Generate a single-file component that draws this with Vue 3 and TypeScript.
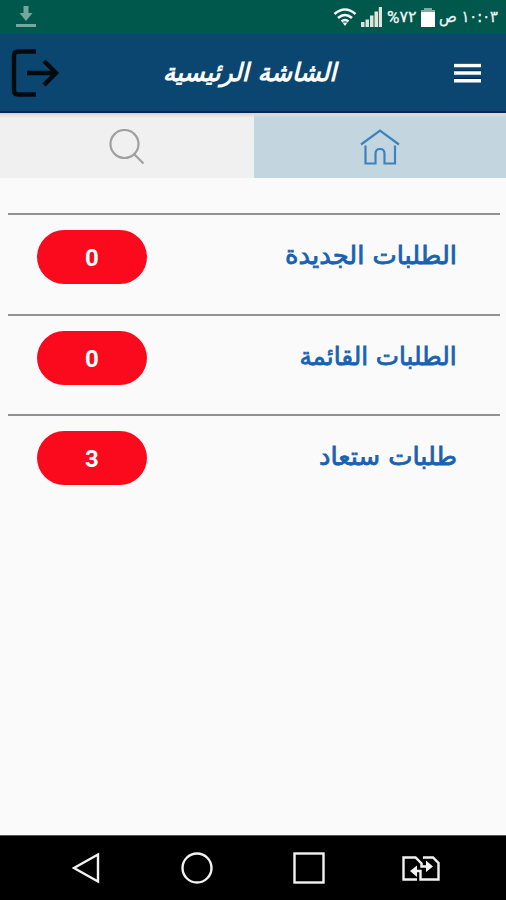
<script setup lang="ts">
interface RequestRow {
  label: string
  count: number
  size: string
}

const rows: RequestRow[] = [
  { label: 'الطلبات الجديدة', count: 0, size: 'new' },
  { label: 'الطلبات القائمة', count: 0, size: 'open' },
  { label: 'طلبات ستعاد', count: 3, size: 'back' },
]
</script>

<template>
  <div class="screen">
    <div class="status">
      <svg class="download" width="20" height="22" viewBox="0 0 20 22">
        <path d="M7.500 0h5v7h4L10 15 3.500 7h4z" />
        <path d="M0 18h20v3H0z" />
      </svg>
      <div class="indicators">
        <svg width="24" height="18" viewBox="0 0 24 18" class="wifi">
          <path d="M1.500 6Q12-3 22.500 6M5 10Q12 4 19 10M8.500 13.500Q12 10.500 15.500 13.500" />
          <path class="dot" d="M9.500 14.500h5L12 18z" />
        </svg>
        <svg width="21" height="20" viewBox="0 0 21 20" class="signal">
          <path d="M0 15h3.500v5H0zM4.500 12.500h3.500V20h-3.500zM9 8.500h3.500V20H9zM13.500 4.500h3.500V20h-3.500zM17.800 0h3.200v20h-3.200z" />
        </svg>
        <span class="percent" dir="ltr"><span class="sign">%</span><span>٧٢</span></span>
        <svg width="14" height="20" viewBox="0 0 14 20" class="battery">
          <path class="cap" d="M3 0h8v2h3v4H0V2h3z" />
          <path d="M0 4h14v15H0z" />
        </svg>
        <span class="clock" dir="rtl">١٠:٠٣ ص</span>
      </div>
    </div>

    <header class="bar">
      <svg class="logout" width="50" height="48" viewBox="0 0 50 48">
        <path d="M25 2.500H7Q3 2.500 3 6.500V41.500Q3 45.500 7 45.500H25M16 24H45M33 12L45 24 33 36" />
      </svg>
      <h1 class="title" dir="rtl"><span>الشاشة الرئيسية</span></h1>
      <svg class="menu" width="27" height="20" viewBox="0 0 27 20">
        <path class="edge" d="M0 0.500h27M0 8h27M0 15.500h27" />
        <path d="M0 2.500h27M0 10h27M0 17.800h27" />
      </svg>
    </header>

    <nav class="tabs">
      <div class="tab">
        <svg width="36" height="36" viewBox="0 0 36 36" class="search">
          <circle cx="15.500" cy="15" r="14" />
          <path d="M25 25L34.500 34.500" />
        </svg>
      </div>
      <div class="tab active">
        <svg width="40" height="36" viewBox="0 0 40 36" class="home">
          <path d="M1 15.500L20 1.500 39 15.500M5.500 16.500V34.500H15.500V24.500Q15.500 20 20 20T24.500 24.500V34.500H35V16.500" />
        </svg>
      </div>
    </nav>

    <main class="list">
      <div v-for="row in rows" :key="row.label" class="row">
        <span class="badge">{{ row.count }}</span>
        <span class="label" :class="row.size" dir="rtl">{{ row.label }}</span>
      </div>
    </main>

    <footer class="system">
      <svg width="28" height="32" viewBox="0 0 28 32">
        <path d="M26 2.500V29.500L2 16z" />
      </svg>
      <svg width="32" height="32" viewBox="0 0 32 32">
        <circle cx="16" cy="16" r="14.500" />
      </svg>
      <svg width="32" height="32" viewBox="0 0 32 32">
        <rect x="1.500" y="1.500" width="29" height="29" />
      </svg>
      <svg width="38" height="25" viewBox="0 0 38 25">
        <path d="M15 23.500H1.500V1.500H13.500L19.500 7.500V10.500H27" />
        <path d="M21 1.500H31L36.500 7V23.500H18.500V15H11" />
        <path class="solid" d="M24 4.500L31 10.500 24 16zM15 9.500L8 15 15 21z" />
      </svg>
    </footer>
  </div>
</template>

<style>
body {
  margin: 0;
}
</style>

<style scoped>
.screen {
  width: 506px;
  height: 900px;
  display: flex;
  flex-direction: column;
  background: #fafafa;
  font-family: 'DejaVu Sans', 'Noto Sans', sans-serif;
  overflow: hidden;
}
svg {
  display: block;
  flex: none;
}
.status {
  box-sizing: border-box;
  height: 34px;
  flex: none;
  padding: 0 8px 0 16px;
  display: flex;
  justify-content: space-between;
  background: #00574b;
  color: #f1f6f5;
}
.download {
  margin-top: 6px;
  fill: #74a89f;
}
.indicators {
  display: flex;
  align-items: flex-start;
}
.wifi {
  margin: 8px 4px 0 0;
  fill: none;
  stroke: #f4f8f7;
  stroke-width: 2.6;
}
.wifi .dot {
  fill: #f4f8f7;
  stroke: none;
}
.signal {
  margin-top: 7px;
  fill: #e0e5dc;
}
.percent {
  display: flex;
  width: 29px;
  margin: 7px 5px 0 5px;
  font-size: 16px;
  line-height: 20px;
  white-space: nowrap;
  -webkit-text-stroke: 0.3px #f1f6f5;
}
.sign {
  font-family: Roboto, sans-serif;
  font-size: 17px;
}
.battery {
  margin: 8px 3px 0 0;
  fill: #fff;
}
.battery .cap {
  fill: #7faba2;
}
.clock {
  width: 60px;
  margin-top: 7px;
  font-size: 16px;
  line-height: 20px;
  white-space: nowrap;
  -webkit-text-stroke: 0.3px #f1f6f5;
  transform: scaleX(0.92);
  transform-origin: right;
}
.bar {
  box-sizing: border-box;
  height: 79px;
  flex: none;
  padding: 0 25px 0 10px;
  display: grid;
  grid-template-columns: 50px 1fr 27px;
  align-items: center;
  background: #0b4670;
  border-bottom: 2px solid #032657;
}
.logout {
  margin-left: 1px;
  fill: none;
  stroke: #020a10;
  stroke-width: 4.4;
}
.title {
  margin: 0;
  padding-right: 15px;
  text-align: center;
  font-size: 25px;
  line-height: 36px;
  font-weight: 700;
  font-style: italic;
  color: #fff;
  white-space: nowrap;
}
.menu {
  fill: none;
  stroke: #fff;
  stroke-width: 3.4;
}
.menu .edge {
  stroke: #032657;
  stroke-width: 1.5;
}
.tabs {
  height: 65px;
  flex: none;
  display: grid;
  grid-template-columns: 254px 252px;
  background: #f0f0f0;
}
.tab {
  display: flex;
  justify-content: center;
  padding-top: 16px;
  background: linear-gradient(#d5d3d2, #f0f0f0 5px);
}
.tab.active {
  background: linear-gradient(#d8d9da 2px, #c3d5df 5px);
}
.search {
  fill: none;
  stroke: #a0a0a0;
  stroke-width: 2.2;
}
.home {
  fill: none;
  stroke: #3c83bd;
  stroke-width: 2.2;
}
.list {
  flex: 1;
  padding: 35px 6px 0 8px;
}
.row {
  box-sizing: border-box;
  height: 100.5px;
  padding: 15px 43px 0 29px;
  display: flex;
  align-items: flex-start;
  justify-content: space-between;
  border-top: 2px solid #929292;
}
.badge {
  width: 110px;
  height: 54px;
  border-radius: 27px;
  background: #fa0a1c;
  color: #fff;
  font: 700 24px/56px Roboto, sans-serif;
  text-align: center;
}
.label {
  color: #1862b2;
  font-size: 25px;
  line-height: 52px;
  -webkit-text-stroke: 0.8px #1862b2;
  white-space: nowrap;
  transform-origin: right;
}
.label.new {
  transform: scaleX(1.03);
}
.label.open {
  transform: scaleX(0.985);
}
.label.back {
  transform: scaleX(1.03);
}
.system {
  box-sizing: border-box;
  height: 65px;
  flex: none;
  padding: 0 0 0 72px;
  display: grid;
  grid-template-columns: 109px 112px 109px 38px;
  align-items: center;
  background: #000;
  border-top: 1px solid #555;
}
.system svg {
  fill: none;
  stroke: #f2f2f2;
  stroke-width: 2.4;
}
.system .solid {
  fill: #f2f2f2;
  stroke: none;
}
</style>
